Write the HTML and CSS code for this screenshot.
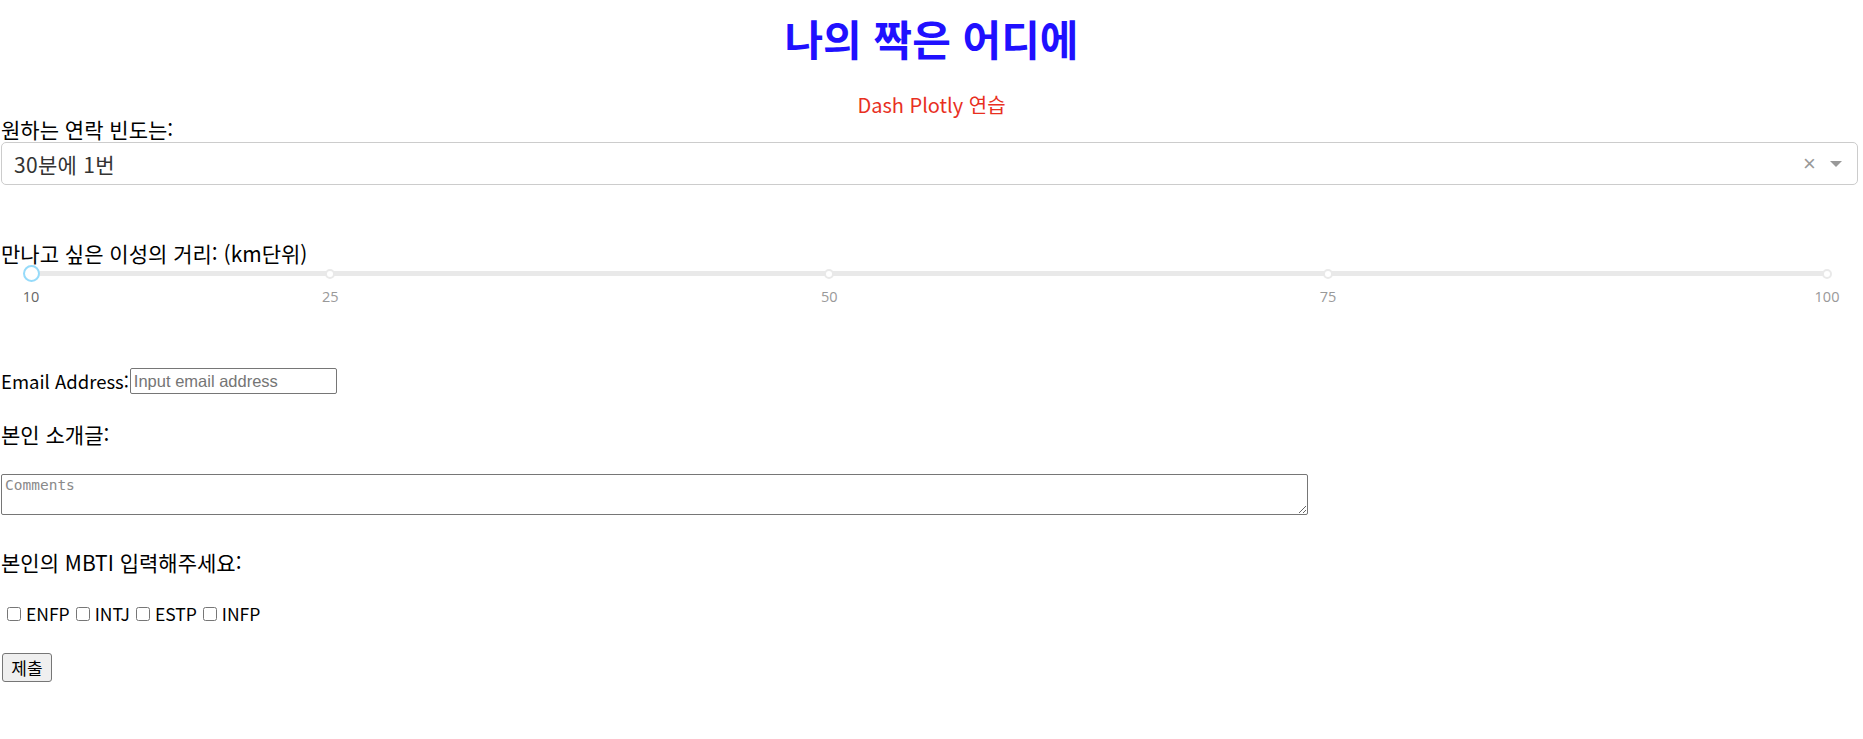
FILE: index.html
```html
<!DOCTYPE html>
<html lang="ko">
<head>
<meta charset="utf-8">
<title>나의 짝은 어디에</title>
<link rel="stylesheet" href="styles.css">
</head>
<body>
<div class="app">
  <h1 class="title">나의 짝은 어디에</h1>
  <div class="subtitle">Dash Plotly 연습</div>

  <div class="field-label">원하는 연락 빈도는:</div>
  <div class="dropdown">
    <span class="dd-value">30분에 1번</span>
    <span class="dd-clear">×</span>
    <span class="dd-arrow-zone"><span class="dd-arrow"></span></span>
  </div>

  <div class="field-label slider-label">만나고 싶은 이성의 거리: (km단위)</div>
  <div class="slider">
    <div class="rail">
      <span class="dot" style="left:0%"></span>
      <span class="dot" style="left:16.667%"></span>
      <span class="dot" style="left:44.444%"></span>
      <span class="dot" style="left:72.222%"></span>
      <span class="dot" style="left:100%"></span>
      <span class="handle" style="left:0%"></span>
    </div>
    <div class="marks">
      <span class="mark active" style="left:0%">10</span>
      <span class="mark" style="left:16.667%">25</span>
      <span class="mark" style="left:44.444%">50</span>
      <span class="mark" style="left:72.222%">75</span>
      <span class="mark" style="left:100%">100</span>
    </div>
  </div>

  <div class="email-row">
    <span class="email-label">Email Address:</span><input class="email-input" type="email" placeholder="Input email address">
  </div>

  <div class="field-label intro-label">본인 소개글:</div>
  <textarea class="comments" placeholder="Comments"></textarea>

  <div class="field-label mbti-label">본인의 MBTI 입력해주세요:</div>
  <div class="checks">
    <label class="check"><input type="checkbox" class="cb">ENFP</label>
    <label class="check"><input type="checkbox" class="cb">INTJ</label>
    <label class="check"><input type="checkbox" class="cb">ESTP</label>
    <label class="check"><input type="checkbox" class="cb">INFP</label>
  </div>

  <button class="submit" type="button">제출</button>
</div>
</body>
</html>
```

FILE: styles.css
```css
html, body {
  margin: 0;
  padding: 0;
  background: #ffffff;
}

.app {
  font-family: "Noto Sans CJK KR", "Noto Sans", sans-serif;
  font-size: 20px;
  color: #000000;
}

.title {
  margin: 0;
  padding-top: 14px;
  height: 48px;
  line-height: 48px;
  font-size: 42px;
  font-weight: 700;
  text-align: center;
  color: #2010ff;
}

.subtitle {
  margin-top: 31px;
  line-height: 24px;
  text-align: center;
  color: #e8301f;
}

.field-label {
  display: block;
  line-height: 24px;
  padding-left: 1px;
  font-size: 21px;
}

.dropdown {
  margin: 1px 5px 0 1px;
  height: 41px;
  border: 1px solid #cccccc;
  border-radius: 5px;
  display: flex;
  align-items: center;
  padding-right: 6px;
  box-sizing: content-box;
  color: #333333;
}

.dd-value {
  flex: 1;
  padding-left: 12px;
  font-size: 21px;
  letter-spacing: 0.3px;
}

.dd-clear {
  width: 21px;
  text-align: center;
  color: #999999;
  font-family: "Liberation Sans", Arial, sans-serif;
  font-size: 22px;
  line-height: 1;
}

.dd-arrow-zone {
  width: 31px;
  display: flex;
  justify-content: center;
}

.dd-arrow {
  width: 0;
  height: 0;
  border-top: 6px solid #999999;
  border-left: 6px solid transparent;
  border-right: 6px solid transparent;
}

.slider-label {
  margin-top: 56px;
}

.slider {
  margin: 0 36px 0 31px;
  padding-top: 6px;
}

.rail {
  position: relative;
  height: 5px;
  background: #e9e9e9;
  border-radius: 3px;
}

.dot {
  position: absolute;
  top: 50%;
  width: 10px;
  height: 10px;
  margin: -5px 0 0 -5px;
  box-sizing: border-box;
  border: 2px solid #e9e9e9;
  border-radius: 50%;
  background: #ffffff;
}

.handle {
  position: absolute;
  top: 50%;
  width: 17px;
  height: 17px;
  margin: -8.5px 0 0 -8.5px;
  box-sizing: border-box;
  border: 2.5px solid #96dbfa;
  border-radius: 50%;
  background: #ffffff;
}

.marks {
  position: relative;
  height: 18px;
  margin-top: 12px;
  font-family: "Open Sans", "Noto Sans", sans-serif;
  font-size: 14.5px;
  line-height: 18px;
  color: #999999;
}

.mark {
  position: absolute;
  top: 0;
  transform: translateX(-50%);
}

.mark.active {
  color: #666666;
}

.email-row {
  margin-top: 62px;
  display: flex;
  align-items: center;
  height: 26px;
  padding-left: 1px;
}

.email-label {
  font-size: 18.5px;
}

.email-input {
  margin: 0 0 0 1px;
  width: 207px;
  height: 26px;
  box-sizing: border-box;
  border: 1px solid #767676;
  border-radius: 2px;
  padding: 1px 3px;
  font-family: "Liberation Sans", Arial, sans-serif;
  font-size: 16.5px;
}

.email-input::placeholder {
  color: #757575;
}

.intro-label {
  margin-top: 28px;
}

.comments {
  display: block;
  margin: 28px 0 0 1px;
  width: 1307px;
  height: 41px;
  box-sizing: border-box;
  border: 1px solid #767676;
  border-radius: 2px;
  padding: 2px 3px;
  font-family: "DejaVu Sans Mono", "Liberation Mono", monospace;
  font-size: 14.5px;
  resize: both;
}

.comments::placeholder {
  color: #8a8a8a;
}

.mbti-label {
  margin-top: 35px;
}

.checks {
  margin-top: 28px;
  height: 24px;
  display: flex;
  align-items: center;
  padding-left: 1px;
}

.check {
  display: flex;
  align-items: center;
  line-height: 24px;
  font-size: 17.5px;
}

.cb {
  width: 14px;
  height: 14px;
  margin: 0 5px 0 6px;
}

.submit {
  display: block;
  margin: 27px 0 0 2px;
  width: 50px;
  height: 29px;
  padding: 0;
  border: 1px solid #767676;
  border-radius: 3px;
  background: #efefef;
  font-family: "Noto Sans CJK KR", sans-serif;
  font-size: 17px;
  color: #000000;
}
```
